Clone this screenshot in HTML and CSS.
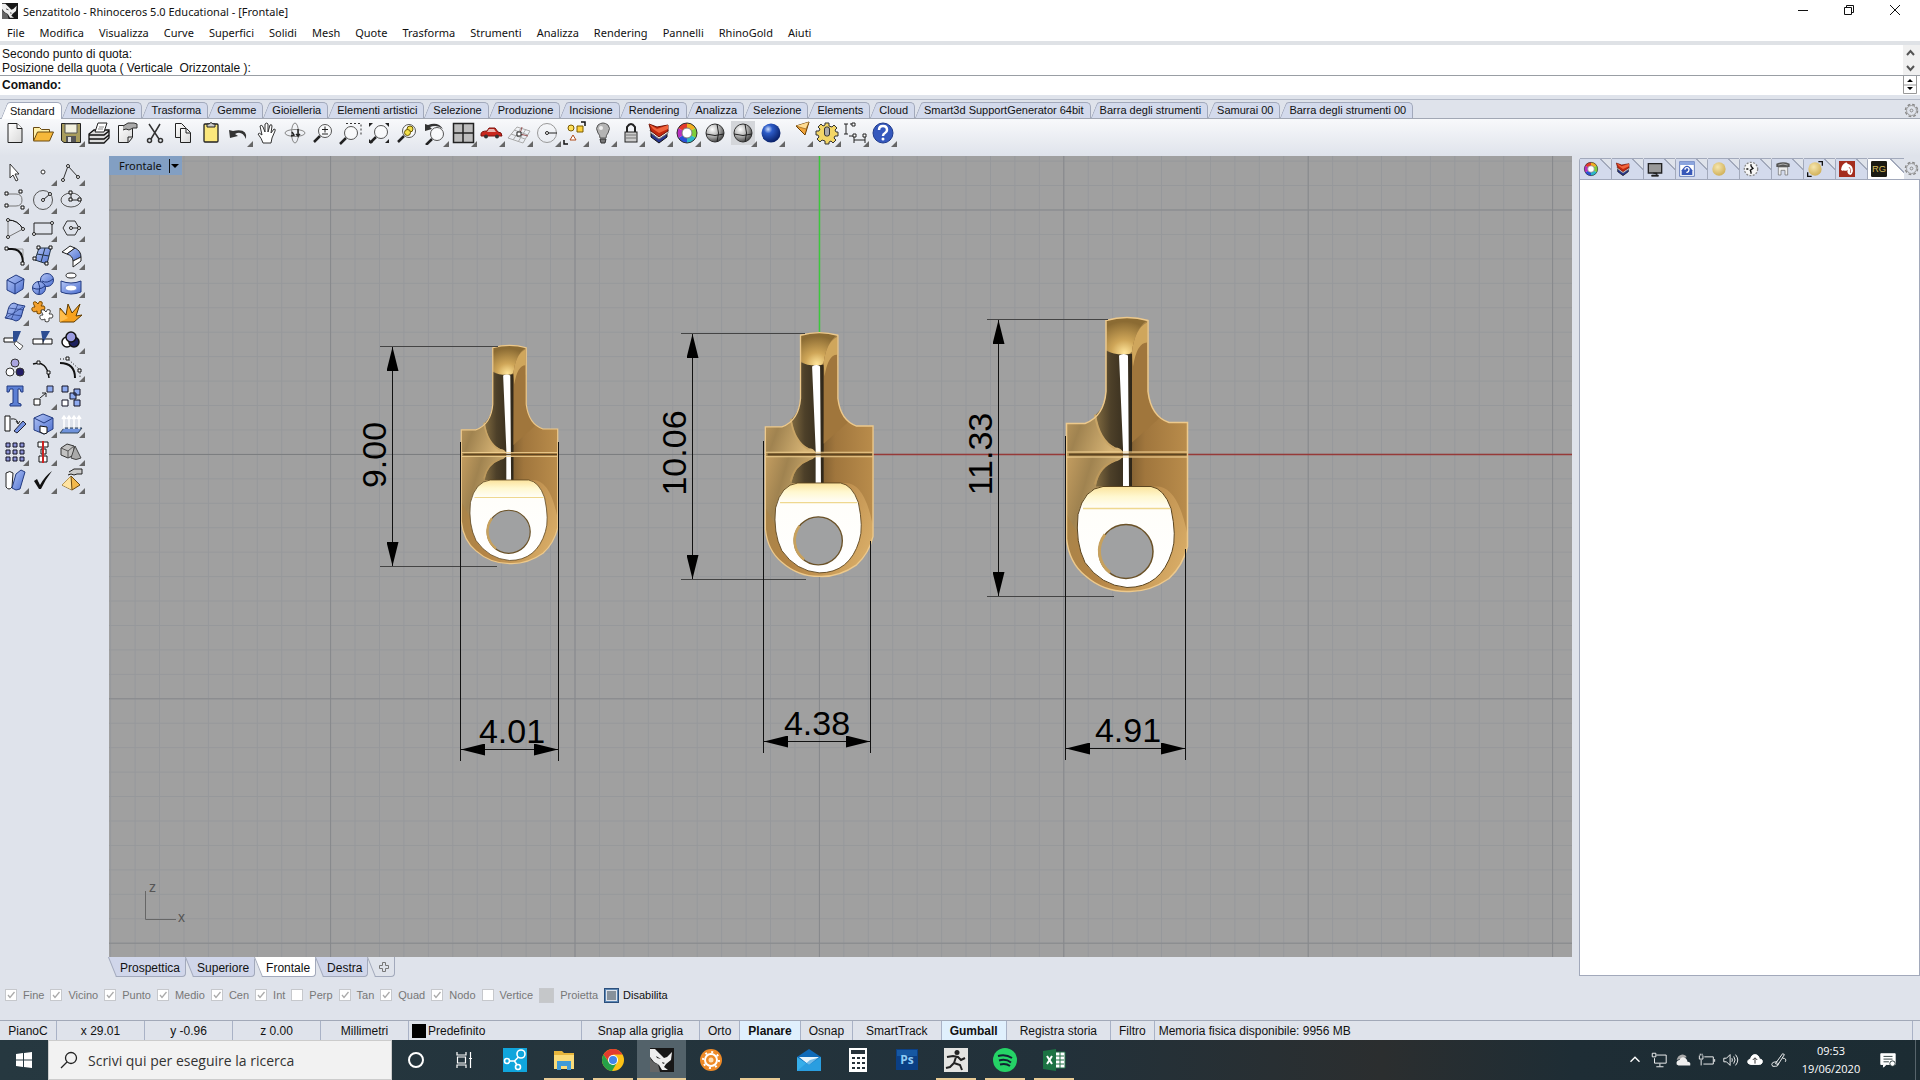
FILE: index.html
```html
<!DOCTYPE html>
<html lang="it">
<head>
  <meta charset="UTF-8" />
  <title>Senzatitolo - Rhinoceros 5.0 Educational - [Frontale]</title>
  <link rel="stylesheet" href="styles.css">
</head>
<body>
  <!-- shared gradients and shapes -->
  <svg class="defs" width="0" height="0">
    <defs>
      <linearGradient id="blue" x1="0" y1="0" x2="1" y2="1"><stop offset="0" stop-color="#b4c6f6"/><stop offset="1" stop-color="#4c6fd0"/></linearGradient>
      <linearGradient id="paper" x1="0" y1="0" x2="1" y2="1"><stop offset="0" stop-color="#fff"/><stop offset="1" stop-color="#d8d8d8"/></linearGradient>
      <radialGradient id="ballGrey" cx=".35" cy=".3" r=".75"><stop offset="0" stop-color="#fff"/><stop offset=".5" stop-color="#b5b5b5"/><stop offset="1" stop-color="#3c3c3c"/></radialGradient>
      <radialGradient id="ballBlue" cx=".35" cy=".3" r=".75"><stop offset="0" stop-color="#cfe0ff"/><stop offset=".3" stop-color="#2d5cc8"/><stop offset="1" stop-color="#061c62"/></radialGradient>
      <radialGradient id="ballGold" cx=".4" cy=".35" r=".7"><stop offset="0" stop-color="#f6e6ae"/><stop offset="1" stop-color="#cfae55"/></radialGradient>
      <linearGradient id="body" x1="0" y1="0" x2="1" y2="1"><stop offset="0" stop-color="#dcb573"/><stop offset=".3" stop-color="#a5844b"/><stop offset=".6" stop-color="#b48445"/><stop offset="1" stop-color="#e0b56e"/></linearGradient>
      <linearGradient id="right" x1="0" y1="0" x2="1" y2="0"><stop offset="0" stop-color="#7c5c30"/><stop offset=".3" stop-color="#a0763d"/><stop offset="1" stop-color="#b98c4b"/></linearGradient>
      <linearGradient id="left" x1="0" y1="0" x2="1" y2=".4"><stop offset="0" stop-color="#c39d60"/><stop offset=".4" stop-color="#a08350"/><stop offset="1" stop-color="#d6b374"/></linearGradient>
      <linearGradient id="dark" x1="0" y1="0" x2="1" y2="0"><stop offset="0" stop-color="#806a40"/><stop offset=".4" stop-color="#4d4029"/><stop offset="1" stop-color="#2e2619"/></linearGradient>
      <radialGradient id="shine" cx=".45" cy=".9" r=".8"><stop offset="0" stop-color="#ffe59a"/><stop offset=".4" stop-color="#cfa658"/><stop offset="1" stop-color="#8b6b33"/></radialGradient>
      <linearGradient id="cream" x1="0" y1="0" x2="0" y2="1"><stop offset="0" stop-color="#fbe39c"/><stop offset=".1" stop-color="#fff8d0"/><stop offset=".22" stop-color="#fffefa"/><stop offset="1" stop-color="#fff"/></linearGradient>
      <pattern id="minor" x="818.9" y="453.9" width="24.44" height="24.44" patternUnits="userSpaceOnUse"><path d="M.5 0V24.44M0 .5H24.44" stroke="#96989b" fill="none"/></pattern>
      <pattern id="major" x="818.9" y="453.9" width="244.4" height="244.4" patternUnits="userSpaceOnUse"><path d="M.5 0V244.4M0 .5H244.4" stroke="#86888b" fill="none"/></pattern>
      <symbol id="gear" viewBox="0 0 16 16"><circle cx="8" cy="8" r="6.500" fill="none" stroke="#888" stroke-width="1.500" stroke-dasharray="3 2.100"/><circle cx="8" cy="8" r="5.300" fill="none" stroke="#999"/><circle cx="8" cy="8" r="1.500" fill="none" stroke="#888"/></symbol>
      <symbol id="wheel" viewBox="0 0 24 24"><g fill="none" stroke-width="5"><path d="M12 4.500A7.500 7.500 0 0 1 18.500 8.200" stroke="#f0b022"/><path d="M18.500 8.200A7.500 7.500 0 0 1 18.500 15.800" stroke="#7ecf3a"/><path d="M18.500 15.800A7.500 7.500 0 0 1 12 19.500" stroke="#2cb8c8"/><path d="M12 19.500A7.500 7.500 0 0 1 5.500 15.800" stroke="#2a50d8"/><path d="M5.500 15.800A7.500 7.500 0 0 1 5.500 8.200" stroke="#b830c0"/><path d="M5.500 8.200A7.500 7.500 0 0 1 12 4.500" stroke="#e23a2c"/></g><circle cx="12" cy="12" r="10" fill="none" stroke="#333"/><circle cx="12" cy="12" r="5" fill="#fff" stroke="#777"/></symbol>
      <symbol id="layers" viewBox="0 0 24 24"><path d="M4 12l8 5 8-6v5l-8 6-8-6z" fill="#28368c" stroke="#111"/><path d="M3 9l9 5 9-5v3l-9 6-8-6z" fill="#fff" stroke="#777"/><path d="M2 3l8 3 11-2v6l-9 6-8-6z" fill="#c2280e" stroke="#6c1206"/><path d="M2 3l8 5 11-4v4l-9 4-6-4z" fill="#f0643c"/></symbol>
      <symbol id="rhino" viewBox="0 0 24 24"><path d="M0 0h24v24H0z" fill="#171717"/><path d="M0 1h5l5 5 4 4 3-1 5-5-1 8-5 4-2 3 4 3h-6l-3-5-5-3-4-5z" fill="#eee"/><path d="M0 9q2 6 8 7l2 8H0z" fill="#666"/><path d="M6 8l5 3-4-1zM12 14l3 1-2 1z" fill="#222"/></symbol>
      <symbol id="lens" viewBox="0 0 24 24"><circle cx="14" cy="10" r="6.500" fill="#fff" fill-opacity=".6" stroke="#555"/><path d="M9 15l-6 6" stroke="#222" stroke-width="2.500"/></symbol>
      <symbol id="pendant" viewBox="-62 -139 124 278" overflow="visible">
        <path d="M-21-134Q0-140 21-134V-63Q24-38 42-32H60.500V92Q56 111 42 124Q22 138 0 137Q-24 137-42 121Q-58 108-60.500 84V-31H-42Q-23-38-21-63Z" fill="url(#body)"/>
        <path d="M0-100H21V-63Q24-38 42-32H60V-2H0Z" fill="url(#right)"/>
        <path d="M0 2H60V78Q50 30 28 32H0Z" fill="url(#right)"/>
        <path d="M-60-31H-42Q-23-38-21-63L-4-2H-60Z" fill="url(#left)"/>
        <path d="M-60 2H-4V32H-24Q-44 34-50 78L-60 60Z" fill="url(#left)"/>
        <path d="M-21-134Q0-140 20-134Q8-126 5-103Q-6-92-20-105Z" fill="url(#shine)"/>
        <path d="M-21-104Q-10-98 6-101L5-2H-4Q-6-7-12-7Q-28-14-31-40Q-22-48-21-63Z" fill="url(#dark)"/>
        <path d="M5-103Q8-126 20-132V-63Q22-44 32-36L5-12Z" fill="#a0763c"/>
        <path d="M5-103Q8-126 20-132V-112Q10-112 6-88Z" fill="#cfa65c"/>
        <path d="M-31 32Q-28 12-12 7Q-7 6-5 3H5V32Z" fill="url(#dark)"/>
        <path d="M-32-40Q-28-14-12-6" fill="none" stroke="#c9a566" stroke-width="2"/>
        <path d="M-32 30Q-28 12-12 6" fill="none" stroke="#bd995c" stroke-width="2"/>
        <path d="M-8-99Q-3-102 1-99L2 34H-4L-4-6Z" fill="#fff"/>
        <path d="M-58 0H60" stroke="#5d4521" stroke-width="2"/>
        <path d="M-60-2.500H60M-60 2.500H60" stroke="#f5d596"/>
        <path d="M-21-134Q0-140 21-134V-63Q24-38 42-32H60.500V92Q56 111 42 124Q22 138 0 137Q-24 137-42 121Q-58 108-60.500 84V-31H-42Q-23-38-21-63Z" fill="none" stroke="#edc98c" stroke-width="1.500"/>
        <path d="M-24 32H24Q37 34 44 54Q50 82 45 97Q34 133 0 133Q-26 131-42 108Q-52 88-49 60Q-43 34-24 32Z" fill="url(#cream)" stroke="#5c451f"/>
        <path d="M-44 54H43" stroke="#efd88f" stroke-width="1.500"/>
        <circle cx="-1" cy="97" r="27" fill="#a0a1a2" stroke="#6b5228" stroke-width="1.500"/>
        <path d="M-22 80A27 27 0 0 0-17 118" fill="none" stroke="#c7a15e" stroke-width="3"/>
      </symbol>
      <marker id="arrow" viewBox="0 0 24 12" refX="24" refY="6" markerWidth="24" markerHeight="12" markerUnits="userSpaceOnUse" orient="auto-start-reverse"><path d="M0 0L24 6L0 12z"/></marker>
    </defs>
  </svg>

  <header class="titlebar">
    <svg class="app-icon" viewBox="0 0 24 24"><use href="#rhino"/></svg>
    <span>Senzatitolo - Rhinoceros 5.0 Educational - [Frontale]</span>
    <div class="window-buttons">
      <button aria-label="Riduci"><svg viewBox="0 0 12 12"><path d="M1 6.500h10"/></svg></button>
      <button aria-label="Ripristina"><svg viewBox="0 0 12 12"><path d="M1.500 3.500h7v7h-7zM3.500 3.500v-2h7v7h-2"/></svg></button>
      <button aria-label="Chiudi"><svg viewBox="0 0 12 12"><path d="M1 1l10 10M11 1L1 11"/></svg></button>
    </div>
  </header>
  <nav class="menu">
    <button>File</button><button>Modifica</button><button>Visualizza</button><button>Curve</button><button>Superfici</button><button>Solidi</button><button>Mesh</button><button>Quote</button><button>Trasforma</button><button>Strumenti</button><button>Analizza</button><button>Rendering</button><button>Pannelli</button><button>RhinoGold</button><button>Aiuti</button>
  </nav>

  <section class="command">
    <div class="history">
      <div>Secondo punto di quota:<br>Posizione della quota ( Verticale&nbsp; Orizzontale ):</div>
      <div class="scroll"><svg viewBox="0 0 15 30"><path d="M4 10l3.500-4L11 10M4 21l3.500 4L11 21" fill="none" stroke="#555" stroke-width="2"/></svg></div>
    </div>
    <div class="prompt">
      <label for="cmd">Comando:</label>
      <input id="cmd" type="text">
      <div class="spin"><svg viewBox="0 0 15 18"><path d="M.5 0v17.500h13V0M.5 9h13" fill="none" stroke="#999"/><path d="M4 6l3-3 3 3zM4 11l3 3 3-3z"/></svg></div>
    </div>
  </section>

  <nav class="tool-tabs">
    <button class="tab active">Standard</button><button class="tab">Modellazione</button><button class="tab">Trasforma</button><button class="tab">Gemme</button><button class="tab">Gioielleria</button><button class="tab">Elementi artistici</button><button class="tab">Selezione</button><button class="tab">Produzione</button><button class="tab">Incisione</button><button class="tab">Rendering</button><button class="tab">Analizza</button><button class="tab">Selezione</button><button class="tab">Elements</button><button class="tab">Cloud</button><button class="tab">Smart3d SupportGenerator 64bit</button><button class="tab">Barra degli strumenti</button><button class="tab">Samurai 00</button><button class="tab">Barra degli strumenti 00</button>
    <svg class="gear"><use href="#gear"/></svg>
  </nav>

  <div class="toolbar">
    <button><svg viewBox="0 0 24 24"><path d="M5 2.500h9l5 5v14H5z" fill="url(#paper)" stroke="#222"/><path d="M14 2.500v5h5" fill="#fff" stroke="#222"/></svg></button>
    <button><svg viewBox="0 0 24 24"><path d="M2.500 19V6.500h6l2 2h8V11" fill="#fff0a8" stroke="#6a4a12"/><path d="M2.500 20l4-9h16l-4 9z" fill="#f6b83a" stroke="#6a4a12"/></svg></button>
    <button class="fly"><svg viewBox="0 0 24 24"><path d="M2.500 2.500h19v19H5l-2.500-2z" fill="#a89c5c" stroke="#222"/><path d="M6 3h12v9H6z" fill="#f2f0de" stroke="#555"/><path d="M7 15h10v6H7z" fill="#555"/><path d="M9 16h3v5H9z" fill="#ddd"/></svg></button>
    <button><svg viewBox="0 0 24 24"><path d="M2 13l5-4h15v8l-5 5H2z" fill="#ddd" stroke="#111" stroke-width="1.300"/><path d="M8 11l3-9h9l-3 9z" fill="#fff" stroke="#222"/><path d="M12 6h5M11 8h5" stroke="#888"/><path d="M2 14h15l5-4M2 18h15l5-4" fill="none" stroke="#111" stroke-width="1.500"/></svg></button>
    <button><svg viewBox="0 0 24 24"><path d="M3.500 4.500h14v12l-4 5h-10z" fill="url(#paper)" stroke="#222"/><path d="M13 21v-5h4" fill="none" stroke="#222"/><path d="M8 5l5-3h6l3 1v4h-4l-4 2-3-1-3 1" fill="#aaa" stroke="#333"/></svg></button>
    <button><svg viewBox="0 0 24 24"><g fill="none" stroke="#333" stroke-width="1.500"><path d="M6 3l10 15M17 3L8 18"/><circle cx="6.500" cy="19.500" r="2"/><circle cx="17.500" cy="19.500" r="2"/></g></svg></button>
    <button><svg viewBox="0 0 24 24"><g fill="url(#paper)" stroke="#222"><path d="M4.500 2.500h6l4 4v10h-10z"/><path d="M9.500 7.500h6l4 4v10h-10z"/><path d="M15 8v4h4" fill="none"/></g></svg></button>
    <button><svg viewBox="0 0 24 24"><rect x="5" y="3" width="14" height="18" rx="1" fill="#fbe77c" stroke="#222" stroke-width="1.300"/><path d="M8 6V3h2q2-3 4 0h2v3z" fill="#ccc" stroke="#222"/></svg></button>
    <button class="fly"><svg viewBox="0 0 24 24"><path d="M2 9l1 8 8-2-3-2q7-4 11 5 2-11-13-8z" fill="#333"/></svg></button>
    <button><svg viewBox="0 0 24 24"><path d="M8 22q-1-4-5-9 1-2 4 1L5 5q2-2 3 1l2 5V3q2-2 3 0v8l2-7q2-1 2 1l-1 7 3-4q2 0 1 2l-3 7-1 5z" fill="#fff" stroke="#333"/></svg></button>
    <button><svg viewBox="0 0 24 24"><ellipse cx="12" cy="12" rx="10" ry="3.500" fill="none" stroke="#888"/><ellipse cx="12" cy="12" rx="3.500" ry="10" fill="none" stroke="#888"/><path d="M15 8v7l-2-2M8 15l3-1-2-3M15 15l2-2" stroke="#222" fill="none" stroke-width="1.500"/></svg></button>
    <button><svg viewBox="0 0 24 24"><use href="#lens"/><path d="M11 8.500h6M14 5.500v6M11 13h6" stroke="#222"/></svg></button>
    <button><svg viewBox="0 0 24 24"><path d="M7 2.500h15v13" fill="none" stroke="#333" stroke-dasharray="2 2"/><use href="#lens" x="-2" y="2"/></svg></button>
    <button><svg viewBox="0 0 24 24"><use href="#lens" y="1"/><path d="M2 6V2h4zM18 2h4v4zM22 18v4h-4zM2 18v4h4z" fill="#222"/></svg></button>
    <button><svg viewBox="0 0 24 24"><use href="#lens"/><circle cx="15" cy="8" r="3" fill="#f3e04a" stroke="#665500"/><circle cx="12.500" cy="11.500" r="3" fill="#f3e04a" stroke="#665500"/></svg></button>
    <button class="fly"><svg viewBox="0 0 24 24"><use href="#lens" y="3"/><path d="M2 3v7l7-2-2-2q7-3 13 2-5-8-15-4z" fill="#333"/></svg></button>
    <button class="fly"><svg viewBox="0 0 24 24"><path d="M2.500 2.500h20v19h-20zM12 2v20M2 12h21" fill="#bdbdbd" stroke="#222" stroke-width="1.500"/></svg></button>
    <button class="fly"><svg viewBox="0 0 24 24"><path d="M2 13q0-3 6-3l2-3h6l3 4q4 0 4 4H2z" fill="#c9271e" stroke="#7c120c"/><path d="M10 8h5l2 3H8z" fill="#e9b5b0"/><circle cx="7" cy="15.500" r="2" fill="#333"/><circle cx="18" cy="15.500" r="2" fill="#333"/></svg></button>
    <button class="fly"><svg viewBox="0 0 24 24"><path d="M1 17l9-11 13 4-7 12zM4 13l14 5M7 9l14 5M6 19l8-12M11 21l8-13" fill="none" stroke="#aaa"/><path d="M13 13l2-7M13 13l8 2" fill="none" stroke="#955"/><path d="M10 11h4v4h-4z" fill="#fff" stroke="#222"/></svg></button>
    <button class="fly"><svg viewBox="0 0 24 24"><circle cx="12" cy="12" r="9.500" fill="none" stroke="#999"/><circle cx="12" cy="12" r="1.500" fill="#fff" stroke="#222"/><path d="M13 12h9" stroke="#222"/></svg></button>
    <button class="fly"><svg viewBox="0 0 24 24"><path d="M18 1h4v4M1 19v4h4" fill="none" stroke="#111" stroke-width="1.500"/><circle cx="8" cy="7" r="3" fill="#ffe05a" stroke="#7a5a00"/><path d="M14 5h6v6h-6z" fill="#ffd23a" stroke="#7a5a00"/><path d="M10 14l3 5H7z" fill="#fff" stroke="#b04a1a"/></svg></button>
    <button class="fly"><svg viewBox="0 0 24 24"><path d="M9 17q0-3-2-5-3-5 0-8 5-4 10 0 3 3 0 8-2 2-2 5z" fill="#b4b4b4" stroke="#555"/><circle cx="10" cy="7" r="2" fill="#eee"/><path d="M9 18h6l-1 4h-4z" fill="#777" stroke="#333"/></svg></button>
    <button class="fly"><svg viewBox="0 0 24 24"><path d="M8 11V6q4-6 8 0v5" fill="none" stroke="#222" stroke-width="2"/><rect x="6" y="11" width="12" height="10" fill="#ccc" stroke="#222"/><path d="M7 14h10M7 17h10" stroke="#777"/></svg></button>
    <button class="fly"><svg><use href="#layers"/></svg></button>
    <button class="fly"><svg><use href="#wheel"/></svg></button>
    <button><svg viewBox="0 0 24 24"><circle cx="12" cy="12" r="9" fill="url(#ballGrey)" stroke="#333"/><path d="M14 3q3 9 0 18M3 13q9 3 18 0" fill="none" stroke="#222"/></svg></button>
    <button class="fly"><svg viewBox="0 0 24 24"><path d="M0 0h24v24H0z" fill="#d4d6da"/><circle cx="12" cy="12" r="9" fill="url(#ballGrey)" stroke="#333"/><path d="M14 3q3 9 0 18M3 13q9 3 18 0" fill="none" stroke="#222"/></svg></button>
    <button class="fly"><svg viewBox="0 0 24 24"><circle cx="12" cy="12" r="9.500" fill="url(#ballBlue)"/></svg></button>
    <button class="fly"><svg viewBox="0 0 24 24"><path d="M9 5l13-4-4 13z" fill="#f2a53a" stroke="#6a3d00"/><path d="M9 5l10 3 3-7" fill="#ffdc92" stroke="#6a3d00" stroke-width=".5"/></svg></button>
    <button class="fly"><svg viewBox="0 0 24 24"><path d="M10 2h4v3l3 1 2-2 3 3-2 2 1 2h2v4h-3l-1 2 2 2-3 3-2-2-2 1v2h-4v-3l-3-1-2 2-3-3 2-2-1-2H1v-4h3l1-2-2-2 3-3 2 2 2-1z" fill="#f3d666" stroke="#333"/><rect x="9.500" y="6" width="5" height="9" rx="2" fill="#aaa" stroke="#333"/></svg></button>
    <button class="fly"><svg viewBox="0 0 24 24"><path d="M3 3v10M1 3h4M1 13h4M7 3h5M11 15v7M22 14v8M11 19h11M11 15H6" fill="none" stroke="#222"/><path d="M9 2h3v3H9zM10 13h3v3h-3zM20 13h3v3h-3z" fill="#fff" stroke="#222"/></svg></button>
    <button class="fly"><svg viewBox="0 0 24 24"><circle cx="12" cy="12" r="10" fill="#3558bd" stroke="#1f3a8c"/><path d="M8 9q0-4 4-4t4 4q0 2-2 3t-2 3" fill="none" stroke="#fff" stroke-width="2.500"/><circle cx="12" cy="18" r="1.500" fill="#fff"/></svg></button>
  </div>

  <main class="workspace">
    <aside class="palette">
      <button><svg viewBox="0 0 24 24"><path d="M7 4v14l3-3 3 6 2-1-3-6h4z" fill="#fff" stroke="#333"/></svg></button>
      <button class="fly"><svg viewBox="0 0 24 24"><circle cx="12" cy="12" r="2" fill="#fff" stroke="#333"/></svg></button>
      <button class="fly"><svg viewBox="0 0 24 24"><path d="M4 20L9 6l10 11" fill="none" stroke="#333"/><g fill="#fff" stroke="#222"><circle cx="4" cy="20" r="1.500"/><circle cx="9" cy="6" r="1.500"/><circle cx="19" cy="17" r="1.500"/></g></svg></button>
      <button class="fly"><svg viewBox="0 0 24 24"><path d="M4 6h9q6 0 6 6t-6 6H4" fill="none" stroke="#777"/><path d="M2 4h3v3H2zM2 16h3v3H2zM16 2h3v3h-3zM18 18h3v3h-3z" fill="#fff" stroke="#111"/></svg></button>
      <button class="fly"><svg viewBox="0 0 24 24"><circle cx="12" cy="12" r="9.500" fill="none" stroke="#555"/><path d="M12 12l7-6" stroke="#222"/><circle cx="12" cy="12" r="1.500" fill="#fff" stroke="#222"/><circle cx="19" cy="6" r="1.500" fill="#fff" stroke="#222"/></svg></button>
      <button class="fly"><svg viewBox="0 0 24 24"><ellipse cx="12" cy="12" rx="10" ry="7" fill="none" stroke="#555"/><path d="M12 5v7h9" fill="none" stroke="#222"/><path d="M10 3h3v3h-3zM10 10h3v3h-3zM19 10h3v3h-3z" fill="#fff" stroke="#111"/></svg></button>
      <button class="fly"><svg viewBox="0 0 24 24"><path d="M5 21V4q10 0 15 9z" fill="none" stroke="#777"/><path d="M5 4q10 0 15 9" fill="none" stroke="#111"/><g fill="#fff" stroke="#222"><circle cx="5" cy="4" r="1.500"/><circle cx="5" cy="21" r="1.500"/><circle cx="20" cy="13" r="1.500"/></g></svg></button>
      <button class="fly"><svg viewBox="0 0 24 24"><path d="M3 7h18v11H3z" fill="none" stroke="#222"/><circle cx="3" cy="18" r="1.500" fill="#fff" stroke="#222"/><circle cx="21" cy="7" r="1.500" fill="#fff" stroke="#222"/></svg></button>
      <button class="fly"><svg viewBox="0 0 24 24"><path d="M8 5h8l4 7-4 7H8l-4-7zM12 12h8" fill="none" stroke="#333"/><circle cx="12" cy="12" r="1.500" fill="#fff" stroke="#222"/><circle cx="20" cy="12" r="1.500" fill="#fff" stroke="#222"/></svg></button>
      <button class="fly"><svg viewBox="0 0 24 24"><path d="M4 5h16v16" fill="none" stroke="#999"/><path d="M4 5h5q11 0 11 15" fill="none" stroke="#111" stroke-width="2"/><path d="M2 3h3v3H2zM18 18h3v3h-3z" fill="#fff" stroke="#111"/></svg></button>
      <button class="fly"><svg viewBox="0 0 24 24"><path d="M8 4h12l-4 16-12-4z" fill="url(#blue)" stroke="#234"/><path d="M14 4l-4 14M6 10l12 2" stroke="#234"/><path d="M6 2h3v3H6zM18 2h3v3h-3zM14 18h3v3h-3zM2 13h3v3H2z" fill="#fff" stroke="#111"/></svg></button>
      <button class="fly"><svg viewBox="0 0 24 24"><path d="M3 8l8-6 5 2-8 6z" fill="#fff" stroke="#222"/><path d="M8 10l8-6q6 3 6 9l-8 4q0-5-6-7z" fill="url(#blue)" stroke="#222"/><path d="M14 17l8-4v4l-8 6z" fill="#fff" stroke="#222"/></svg></button>
      <button class="fly"><svg viewBox="0 0 24 24"><path d="M4 8l9-5 8 4-1 10-8 5-8-4z" fill="url(#blue)" stroke="#223a80"/><path d="M4 8l8 4 9-5M12 12v10" fill="none" stroke="#223a80"/></svg></button>
      <button class="fly"><svg viewBox="0 0 24 24"><g fill="url(#blue)" stroke="#223a80"><circle cx="16" cy="8" r="6.500"/><circle cx="8" cy="16" r="6.500"/><path d="M2 16q6 3 12-2M7 9q3 6 1 13M11 9q5 3 11-2" fill="none"/></g></svg></button>
      <button class="fly"><svg viewBox="0 0 24 24"><ellipse cx="12" cy="3.500" rx="5" ry="2.500" fill="#fff" stroke="#222"/><path d="M2 9q10 4 20 0v11q-10 4-20 0z" fill="url(#blue)" stroke="#223a80"/><ellipse cx="12" cy="16" rx="6" ry="3" fill="#fff" stroke="#7791dd"/></svg></button>
      <button class="fly"><svg viewBox="0 0 24 24"><path d="M2 18q2-2 3-8t6-7q3 2 11 3-2 2-3 8t-6 7q-3-2-11-3z" fill="url(#blue)" stroke="#223a80"/><path d="M4 13q6 2 15 3M6 8q7 1 15 2M8 20l7-16M3 18l17-11" fill="none" stroke="#223a80" stroke-width=".7"/></svg></button>
      <button><svg viewBox="0 0 24 24"><path d="M3 5q-2-4 2-3l2 2q1-4 4-2 1 2-1 4 4-1 4 2t-4 2q1 4-2 4t-2-3q-4 2-5-1t3-3z" fill="#f3a12e" stroke="#7a4a00"/><path d="M11 13q-2-4 2-3l2 2q1-4 4-2 1 2-1 4 4-1 4 2t-4 2q1 4-2 4t-2-3q-4 2-5-1t3-3z" fill="#fff" stroke="#444"/></svg></button>
      <button><svg viewBox="0 0 24 24"><path d="M1 22V8l6 7 2-11 4 9 8-9-4 12 6-1-8 7z" fill="#f7a21e" stroke="#5e3b00"/><path d="M1 22V10l8 8z" fill="#ffbe4d"/></svg></button>
      <button><svg viewBox="0 0 24 24"><path d="M1 10h11v4H1z" fill="#fff" stroke="#111"/><path d="M10 3h8l-5 12-3-2z" fill="#2d4d92"/><path d="M13 13l7 5-3 4-6-6z" fill="#fff" stroke="#555"/></svg></button>
      <button><svg viewBox="0 0 24 24"><path d="M2 11h19v5H2z" fill="#fff" stroke="#111"/><path d="M10 3h9l-7 12z" fill="#2d4d92"/><path d="M12 11v5" stroke="#111"/></svg></button>
      <button class="fly"><svg viewBox="0 0 24 24"><g stroke="#111" stroke-width="1.500"><circle cx="8" cy="14" r="5" fill="#fff"/><circle cx="15" cy="14" r="5" fill="#1c205e"/><circle cx="12" cy="9" r="5" fill="#9a9be0"/></g></svg></button>
      <button><svg viewBox="0 0 24 24"><g stroke="#333"><circle cx="12" cy="7" r="4" fill="#a9a4e0"/><circle cx="7" cy="16" r="4" fill="#fff"/><circle cx="17" cy="16" r="4" fill="#231d66"/></g></svg></button>
      <button><svg viewBox="0 0 24 24"><path d="M2 8q14-4 16 14" fill="none" stroke="#111" stroke-width="1.500"/><path d="M6 5h3v3H6zM16 15h3v3h-3z" fill="#fff" stroke="#111"/></svg></button>
      <button class="fly"><svg viewBox="0 0 24 24"><path d="M1 7q15 0 15 15" fill="none" stroke="#111" stroke-width="2"/><path d="M1 3h8l12 11v8" fill="none" stroke="#111" stroke-dasharray="1 2"/><path d="M7 1h3v3H7zM19 13h3v3h-3z" fill="#fff" stroke="#111"/></svg></button>
      <button><svg viewBox="0 0 24 24"><path d="M4 2h16v6h-2l-1-3h-2v14l3 1v2H7v-2l3-1V5H7L6 8H4z" fill="#5b7fd4" stroke="#223a80"/></svg></button>
      <button class="fly"><svg viewBox="0 0 24 24"><path d="M3 15h6v6H3z" fill="#fff" stroke="#111"/><path d="M16 2h6v6h-6z" fill="#8fabf0" stroke="#223"/><path d="M9 14l6-5M15 9h-4M15 9v4" fill="none" stroke="#222"/></svg></button>
      <button><svg viewBox="0 0 24 24"><g fill="#8fabf0" stroke="#112"><path d="M3 2h6v6H3zM15 5h6v6h-6zM11 9h6v6h-6zM15 16h6v6h-6z"/><path d="M3 16h6v6H3z" fill="#fff"/></g></svg></button>
      <button><svg viewBox="0 0 24 24"><path d="M2 4h5v15H2z" fill="#fff" stroke="#111"/><path d="M11 19L20 9l3 3-9 9z" fill="#7593e2" stroke="#223"/><path d="M8 7q6-1 7 4M13 9l2 3 2-3" fill="none" stroke="#222"/></svg></button>
      <button class="fly"><svg viewBox="0 0 24 24"><path d="M3 6l9-4 10 4v11l-9 5-10-4z" fill="url(#blue)" stroke="#223a80"/><path d="M3 6l10 5 9-5" fill="none" stroke="#223a80"/><path d="M9 14l7 1v6l-3 1-4-2z" fill="#fff" stroke="#111"/></svg></button>
      <button class="fly"><svg viewBox="0 0 24 24"><path d="M1 21l4-5h18l-4 5z" fill="#6f93dc" stroke="#345"/><path d="M5 17V5M10 17V4M15 17V4M20 17V5M3 7l2-3 2 3M8 7l2-3 2 3M13 7l2-3 2 3M18 7l2-3 2 3" fill="none" stroke="#fff" stroke-width="1.500"/></svg></button>
      <button class="fly"><svg viewBox="0 0 24 24"><path d="M3 3h4v4H3zM10 3h4v4h-4zM17 3h4v4h-4zM3 10h4v4H3zM10 10h4v4h-4zM17 10h4v4h-4zM3 17h4v4H3zM10 17h4v4h-4zM17 17h4v4h-4z" fill="#8e94d8" stroke="#112"/></svg></button>
      <button class="fly"><svg viewBox="0 0 24 24"><path d="M7 2h10v5H7zM10 9h5v5h-5zM8 16h8v6H8z" fill="#fff" stroke="#111"/><path d="M12 1v22" stroke="#c22" stroke-width="2"/></svg></button>
      <button class="fly"><svg viewBox="0 0 24 24"><path d="M2 8l6-4 7 2v9l-6 3-7-3z" fill="#c2c2c2" stroke="#333"/><path d="M2 8l7 3 6-5M9 11v7" fill="none" stroke="#555"/><path d="M16 6l6 12q-5 3-10 0z" fill="#aaa" stroke="#444"/></svg></button>
      <button class="fly"><svg viewBox="0 0 24 24"><path d="M3 5q4-3 7 0l-1 14q-3 4-6 0z" fill="#fff" stroke="#222"/><path d="M13 6l5-4 4 2-5 17-4 1-4-2z" fill="url(#blue)" stroke="#223a80"/></svg></button>
      <button class="fly"><svg viewBox="0 0 24 24"><path d="M3 13l3-2 3 6Q14 8 21 3q-7 9-11 18H8z" fill="#111"/></svg></button>
      <button class="fly"><svg viewBox="0 0 24 24"><path d="M3 17l9-9 9 9-8 5z" fill="#f3b94c" stroke="#6a4a12"/><path d="M12 8l-9 9 10 5z" fill="#ffe3a0"/><path d="M12 8l1 14" stroke="#6a4a12"/><path d="M10 4l5-3h8v5h-5l-3 1-3-1-3 1" fill="#ccc" stroke="#222"/></svg></button>
    </aside>

    <div class="view-column">
      <div class="viewport">
        <svg class="scene" viewBox="109 156 1463 801" preserveAspectRatio="xMinYMin slice">
          <rect x="109" y="156" width="1463" height="801" fill="#a0a0a0"/>
          <rect x="109" y="156" width="1463" height="801" fill="url(#minor)"/>
          <rect x="109" y="156" width="1463" height="801" fill="url(#major)"/>
          <path d="M819.500 156V454" stroke="#3cc83c" stroke-width="1.500"/>
          <path d="M819 454.500H1572" stroke="#963a38" stroke-width="1.500"/>
          <path d="M109 454.500H819" stroke="#7c7e80"/>

          <use href="#pendant" x="460.100" y="343.700" width="98.800" height="221.600"/>
          <use href="#pendant" x="764" y="330.800" width="110.400" height="247.400"/>
          <use href="#pendant" x="1065" y="315.500" width="124" height="278"/>

          <!-- dimension lines -->
          <g class="dim-lines thin">
            <path d="M380 346.500H498M380 566.500H497M681 333.500H805M681 579.500H806M987 319.500H1108M987 596.500H1114"/>
          </g>
          <g class="dim-lines">
            <path d="M460.500 442V761M558.500 442V761M763.500 441V753M870.500 541V753M1065.500 436V760M1185.500 549V760"/>
          </g>
          <g class="dim-lines arrows">
            <path d="M392.500 347V566"/><path d="M461 749.500H558"/>
            <path d="M692.500 334V579"/><path d="M764 741.500H870"/>
            <path d="M998.500 320V596"/><path d="M1066 748.500H1185"/>
          </g>
          <g class="dim-text">
            <text transform="translate(386 455) rotate(-90)">9.00</text>
            <text x="512" y="743">4.01</text>
            <text transform="translate(686 453) rotate(-90)">10.06</text>
            <text x="817" y="735">4.38</text>
            <text transform="translate(992 454) rotate(-90)">11.33</text>
            <text x="1128" y="742">4.91</text>
          </g>
          <path d="M145.500 891V919.500H176" fill="none" stroke="#666"/>
          <g class="axis-text"><text x="149" y="892">z</text><text x="178" y="922">x</text></g>
        </svg>
        <button class="view-name"><span>Frontale</span><svg viewBox="0 0 12 14"><path d="M1.500 0v14" stroke="#111"/><path d="M3 5h8l-4 4z"/></svg></button>
      </div>
      <nav class="view-tabs">
        <button>Prospettica</button><button>Superiore</button><button class="active">Frontale</button><button>Destra</button><button class="add" aria-label="Nuova vista"><svg viewBox="0 0 10 10"><path d="M3.500.5h3v3h3v3h-3v3h-3v-3h-3v-3h3z" fill="none" stroke="#777"/></svg></button>
      </nav>
    </div>

    <aside class="panel">
      <nav class="panel-tabs">
        <button><svg><use href="#wheel"/></svg></button>
        <button><svg><use href="#layers"/></svg></button>
        <button><svg viewBox="0 0 24 24"><path d="M2 4h20v14H2z" fill="#999" stroke="#222" stroke-width="2"/><path d="M9 18h6v3H7v2h10v-2h-2" fill="#222" stroke="#222"/></svg></button>
        <button><svg viewBox="0 0 24 24"><path d="M1 1h22v22H1z" fill="#fff" stroke="#2c4b9f"/><path d="M1 1h22v5H1z" fill="#8ba4de"/><path d="M4 21v-7q8-14 16 0v7z" fill="#3757b8"/><path d="M9 13q0-3 3-3t3 3-3 4v1" fill="none" stroke="#fff" stroke-width="2"/></svg></button>
        <button><svg viewBox="0 0 24 24"><circle cx="12" cy="12" r="10" fill="url(#ballGold)"/></svg></button>
        <button><svg viewBox="0 0 24 24"><circle cx="12" cy="12" r="10" fill="#f6f6f6" stroke="#888" stroke-width="2" stroke-dasharray="3 2"/><path d="M12 5v3M12 16v3M5 12h3M12 8l3 3-4 3 1 3" fill="none" stroke="#111" stroke-width="2"/></svg></button>
        <button><svg viewBox="0 0 24 24"><path d="M2 4q10-4 20 0v5H2z" fill="#555"/><path d="M5 6q7-3 14 0" fill="none" stroke="#ddd"/><path d="M5 9h14v12h-4v-7H9v7H5z" fill="#eee" stroke="#666"/></svg></button>
        <button><svg viewBox="0 0 24 24"><circle cx="12" cy="12" r="10" fill="url(#ballGold)"/><path d="M17 1h6v6M1 17v6h6" fill="none" stroke="#111" stroke-width="2"/></svg></button>
        <button><svg viewBox="0 0 24 24"><path d="M0 0h24v24H0z" fill="#a42c1e"/><path d="M3 13Q4 5 11 2l2 2q8 2 8 11-1 5-4 6-6-2-4-8-3 3-6 1-1 2-4-1z" fill="#fff"/><path d="M15 9q4 3 2 9" fill="none" stroke="#a42c1e"/></svg></button>
        <button class="active"><svg class="rg" viewBox="0 0 24 24"><rect width="24" height="24" rx="2" fill="#1b1a12"/><text x="12" y="17">RG</text></svg></button>
        <svg class="gear"><use href="#gear"/></svg>
      </nav>
      <div class="panel-body"></div>
    </aside>
  </main>

  <form class="osnap">
    <label><input type="checkbox" checked disabled>Fine</label>
    <label><input type="checkbox" checked disabled>Vicino</label>
    <label><input type="checkbox" checked disabled>Punto</label>
    <label><input type="checkbox" checked disabled>Medio</label>
    <label><input type="checkbox" checked disabled>Cen</label>
    <label><input type="checkbox" checked disabled>Int</label>
    <label><input type="checkbox" disabled>Perp</label>
    <label><input type="checkbox" checked disabled>Tan</label>
    <label><input type="checkbox" checked disabled>Quad</label>
    <label><input type="checkbox" checked disabled>Nodo</label>
    <label><input type="checkbox" disabled>Vertice</label>
    <label><input class="box grey" type="checkbox" disabled>Proietta</label>
    <label class="on"><input class="box" type="checkbox" checked>Disabilita</label>
  </form>

  <footer class="status">
    <span class="w-plane">PianoC</span>
    <span class="w-coord">x 29.01</span>
    <span class="w-coord">y -0.96</span>
    <span class="w-coord">z 0.00</span>
    <span class="w-coord">Millimetri</span>
    <span class="w-layer"><i></i>Predefinito</span>
    <button class="w-grid">Snap alla griglia</button>
    <button>Orto</button>
    <button class="on">Planare</button>
    <button>Osnap</button>
    <button class="wide">SmartTrack</button>
    <button class="on">Gumball</button>
    <button class="wide">Registra storia</button>
    <button>Filtro</button>
    <span class="memory">Memoria fisica disponibile: 9956 MB</span>
  </footer>

  <footer class="taskbar">
    <button class="start" aria-label="Start"><svg viewBox="0 0 16 16"><path d="M0 2l7-1v6.500H0zM8 1l8-1v7.500H8zM0 8.500h7V15l-7-1zM8 8.500h8V16l-8-1z" fill="#fff"/></svg></button>
    <div class="search"><svg viewBox="0 0 18 18"><circle cx="11" cy="7" r="5.500" fill="none" stroke="#222" stroke-width="1.300"/><path d="M7 11l-6 6" stroke="#222" stroke-width="1.300"/></svg><input type="text" placeholder="Scrivi qui per eseguire la ricerca" aria-label="Scrivi qui per eseguire la ricerca"></div>
    <button><svg viewBox="0 0 24 24"><circle cx="12" cy="12" r="7" fill="none" stroke="#fff" stroke-width="2"/></svg></button>
    <button class="task-view"><svg viewBox="0 0 24 24"><path d="M4 4v3h9V4M4 20v-3h9v3M4.500 9h8v6h-8zM17.500 4v16M16 10.500h3" fill="none" stroke="#fff" stroke-width="1.200"/></svg></button>
    <button class="app"><svg viewBox="0 0 24 24"><path d="M0 0h24v24H0z" fill="#10a5dc"/><g fill="none" stroke="#fff" stroke-width="1.600"><circle cx="4" cy="13" r="2.500"/><circle cx="18" cy="6" r="4"/><circle cx="15" cy="19" r="2.500"/><path d="M6.500 13h5l4-4M11.500 13l2.500 4"/></g></svg></button>
    <button class="app open"><svg viewBox="0 0 24 24"><path d="M2 3h8l2 2h10v16H2z" fill="#e7b63c"/><path d="M2 7h20v14H2z" fill="#fbdc79"/><path d="M5 13h14v9h-4v-4H9v4H5z" fill="#3f9bd8"/></svg></button>
    <button class="app open"><svg viewBox="0 0 24 24"><circle cx="12" cy="12" r="11" fill="#fbc116"/><path d="M2.500 6.500A11 11 0 0 1 21.500 6.500H12L8 14z" fill="#e33b2e"/><path d="M2.500 6.500A11 11 0 0 0 11 23l5-8.500H8z" fill="#26a148"/><circle cx="12" cy="12" r="5" fill="#fff"/><circle cx="12" cy="12" r="4" fill="#4285e8"/></svg></button>
    <button class="app open active"><svg><use href="#rhino"/></svg></button>
    <button class="app"><svg viewBox="0 0 24 24"><circle cx="12" cy="12" r="11" fill="#ee8a28"/><circle cx="12" cy="12" r="6" fill="none" stroke="#fff" stroke-width="2"/><circle cx="12" cy="12" r="8" fill="none" stroke="#fff" stroke-width="2" stroke-dasharray="2 4.280"/><circle cx="12" cy="12" r="2.500" fill="#ffe0b5"/></svg></button>
    <button class="app open"></button>
    <button class="app"><svg viewBox="0 0 24 24"><path d="M0 9l12-8 12 8v14H0z" fill="#0f6ab8"/><path d="M2 9h20l-10 8z" fill="#e9f5fc"/><path d="M0 9l12 8 12-8v14H0z" fill="#36aeea"/><path d="M0 23l13-11 11-3v14z" fill="#2392d8" opacity=".6"/></svg></button>
    <button class="app"><svg viewBox="0 0 24 24"><path d="M3 0h18v24H3z" fill="#fff"/><path d="M5 2h14v4H5z" fill="#26323a"/><path d="M6 10h3M11 10h3M16 10h3M6 15h3M11 15h3M16 15h3M6 20h3M11 20h3M16 20h3" stroke="#26323a" stroke-width="2"/></svg></button>
    <button class="app"><svg class="ps" viewBox="0 0 24 24"><path d="M1 1h22v21H1z" fill="#0b3f85"/><path d="M2 2h20v6H2z" fill="#1658a3"/><text x="12" y="16">Ps</text></svg></button>
    <button class="app open"><svg viewBox="0 0 24 24"><path d="M0 0h24v24H0z" fill="#e4e4e2"/><circle cx="13" cy="4.500" r="2.500" fill="#222"/><path d="M3 9l6-1 5 1 3 3 4-2M12 9l-2 6 6 2 2 5M10 15l-4 4-4 1" fill="none" stroke="#222" stroke-width="2"/></svg></button>
    <button class="app open"><svg viewBox="0 0 24 24"><circle cx="12" cy="12" r="12" fill="#25d366"/><path d="M5 8q8-2 14 2M6 12.500q7-2 12 2M7 16.500q6-1.500 10 1.500" fill="none" stroke="#123" stroke-width="2"/></svg></button>
    <button class="app open"><svg viewBox="0 0 24 24"><path d="M12 4h11v16H12z" fill="#fff" stroke="#1e7045"/><path d="M13 8h9M13 12h9M13 16h9M18 4v16" stroke="#1e7045"/><path d="M1 3l13-2v22L1 21z" fill="#1c7343"/><path d="M5 8l5 8M10 8l-5 8" stroke="#fff" stroke-width="2"/></svg></button>

    <div class="tray">
      <button><svg viewBox="0 0 20 20"><path d="M5 12l5-5 5 5" stroke-width="1.500"/></svg></button>
      <button><svg viewBox="0 0 20 20"><path d="M7 4.500h11v9H5V8M11 14v3M7 17.500h8M2.500 2.500h4v4h-4z"/></svg></button>
      <button><svg viewBox="0 0 20 20"><path d="M3 10q1-5 6-6 4 0 5 3z" fill="#aaa" stroke="none"/><path d="M3 15q-1-4 3-5 2-5 7-2 2 2 2 4 4 0 3 4H5z" fill="#eee" stroke="none"/></svg></button>
      <button><svg viewBox="0 0 20 20"><path d="M7 6.500h10v8H6M18.500 9v3M3.500 10v6M1.500 5v4h4V5M2.500 5V3M4.500 5V3"/></svg></button>
      <button><svg viewBox="0 0 20 20"><path d="M2 8h3l4-4v12l-4-4H2zM11 8q1 2 0 4M13 6q3 4 0 8M15 4q5 6 0 12"/></svg></button>
      <button><svg viewBox="0 0 20 20"><path d="M5 15q-4-1-3-4 1-2 3-2 1-5 5-5t5 5q4 0 3 4-1 2-3 2z" fill="#fff"/><path d="M10 14V8M7.500 10L10 7.500 12.500 10" stroke="#222"/></svg></button>
      <button><svg viewBox="0 0 20 20"><path d="M6 14L14 3l2 1-7 11zM14 8q5 0 3 4M8 12q-6 0-6 3t4 2q4 0 3-4"/></svg></button>
      <div class="clock">09:53<br>19/06/2020</div>
      <button class="notes"><svg viewBox="0 0 20 20"><path d="M2 3h16v12H8l-3 3v-3H2z" fill="#fff"/><path d="M5 6h10M5 9h10M5 12h6" stroke="#233"/><circle cx="15" cy="14" r="3" fill="#fff" stroke="#233"/></svg></button>
    </div>
  </footer>
</body>
</html>
```

FILE: styles.css
```css
* {
  box-sizing: border-box;
}

body {
  margin: 0;
  height: 100vh;
  display: flex;
  flex-direction: column;
  overflow: hidden;
  background: #dfe3eb;
  color: #111;
  font-family: "Liberation Sans", Arial, sans-serif;
  font-size: 12px;
}

button {
  padding: 0;
  border: 0;
  background: none;
  color: inherit;
  font: inherit;
  white-space: nowrap;
}

.defs {
  position: absolute;
}

/* title and menu */
.titlebar {
  display: flex;
  align-items: center;
  height: 22px;
  padding: 0 2px;
  background: #fff;
  font-family: "Noto Sans", sans-serif;
  font-size: 11px;
}

.app-icon {
  width: 16px;
  height: 16px;
  margin-right: 5px;
}

.window-buttons {
  display: flex;
  margin-left: auto;
}

.window-buttons button {
  width: 46px;
  height: 22px;
}

.window-buttons svg {
  width: 12px;
  height: 12px;
  fill: none;
  stroke: #111;
}

.menu {
  display: flex;
  gap: 15px;
  height: 19px;
  padding: 2px 7px 0;
  background: #fff;
  font-family: "Noto Sans", sans-serif;
  font-size: 11px;
}

/* command area */
.command {
  border-top: 4px solid #dfe2e6;
  border-bottom: 4px solid #dfe3eb;
  background: #fff;
}

.history {
  display: flex;
  justify-content: space-between;
  height: 31px;
  padding-left: 2px;
  border-bottom: 1px solid #999ea4;
  line-height: 14px;
}

.history > :first-child {
  padding-top: 2px;
}

.scroll {
  width: 17px;
  background: #f0f0f0;
}

.scroll svg,
.spin svg {
  width: 15px;
  height: 100%;
}

.prompt {
  display: flex;
  height: 19px;
  padding-left: 2px;
  line-height: 18px;
  font-weight: bold;
}

.prompt input {
  flex: 1;
  border: 0;
  outline: 0;
}

.spin {
  width: 17px;
  height: 18px;
}

/* toolbar tabs */
.tool-tabs {
  display: flex;
  align-items: flex-end;
  height: 20px;
  padding-left: 1px;
  border-top: 1px solid #b4bac8;
  border-bottom: 1px solid #a2a8b4;
}

.tab {
  position: relative;
  isolation: isolate;
  height: 16px;
  padding: 0 7px 0 9px;
  font-size: 11px;
  line-height: 16px;
}

.tab::before,
.tab::after {
  content: "";
  position: absolute;
  z-index: -1;
  top: 0;
  bottom: 0;
  background: #d3daec;
  border-top: 1px solid #a2a9bb;
}

.tab::before {
  left: 3px;
  width: 50%;
  border-left: 1px solid #a2a9bb;
  border-top-left-radius: 3px;
  transform: skewX(-22deg);
}

.tab::after {
  left: 30%;
  right: 0;
  border-right: 1px solid #a2a9bb;
  border-top-right-radius: 5px;
}

.tab.active {
  height: 17px;
  margin-bottom: -1px;
}

.tab.active::before,
.tab.active::after {
  background: #fff;
}

.gear {
  width: 15px;
  height: 15px;
  margin-left: auto;
  margin-right: 1px;
}

/* icon buttons */
.toolbar {
  display: flex;
  height: 37px;
  padding-left: 1px;
  background: linear-gradient(#f8f9fb, #dfe3eb);
}

.toolbar button,
.palette button {
  position: relative;
  width: 28px;
  height: 28px;
}

.toolbar svg,
.palette svg {
  display: block;
  width: 24px;
  height: 24px;
  margin: 0 auto;
}

.fly::after {
  content: "";
  position: absolute;
  right: 0;
  bottom: 0;
  border-left: 6px solid transparent;
  border-bottom: 6px solid #666;
}

.workspace {
  flex: 1;
  display: flex;
  min-height: 0;
}

.palette {
  display: grid;
  grid-template-columns: repeat(3, 28px);
  grid-auto-rows: 28px;
  align-content: start;
  width: 109px;
  padding: 2px 0 0 1px;
}

/* viewport */
.view-column {
  flex: 1;
  display: flex;
  flex-direction: column;
  min-width: 0;
}

.viewport {
  position: relative;
  flex: 1;
  min-height: 0;
}

.scene {
  display: block;
  width: 100%;
  height: 100%;
}

.dim-lines {
  fill: none;
  stroke: #111;
}

.thin {
  stroke: #444;
}

.arrows path {
  marker-start: url(#arrow);
  marker-end: url(#arrow);
}

.dim-text {
  font-size: 34px;
  text-anchor: middle;
}

.axis-text {
  font-size: 14px;
  fill: #555;
}

.view-name {
  position: absolute;
  top: 0;
  left: 0;
  display: flex;
  align-items: center;
  gap: 6px;
  height: 19px;
  padding: 0 2px 0 10px;
  background: #829fc3;
  font-family: "Noto Sans", sans-serif;
  font-size: 11px;
}

.view-name svg {
  width: 12px;
  height: 14px;
}

.view-tabs {
  display: flex;
  height: 20px;
}

.view-tabs button {
  position: relative;
  isolation: isolate;
  height: 20px;
  padding: 2px 6px 0 11px;
  font-size: 12px;
}

.view-tabs button::before,
.view-tabs button::after {
  content: "";
  position: absolute;
  z-index: -1;
  top: 0;
  bottom: 0;
  background: #d0d6ea;
  border-bottom: 1px solid #a2a9bb;
}

.view-tabs button::before {
  left: 3px;
  width: 50%;
  border-left: 1px solid #a2a9bb;
  transform: skewX(22deg);
}

.view-tabs button::after {
  left: 30%;
  right: 0;
  border-right: 1px solid #a2a9bb;
  border-bottom-right-radius: 4px;
}

.view-tabs .active::before,
.view-tabs .active::after {
  background: #fff;
}

.view-tabs .add::before,
.view-tabs .add::after {
  background: #dfe3eb;
}

.add svg {
  width: 10px;
  height: 10px;
}

/* right panel */
.panel {
  display: flex;
  flex-direction: column;
  width: 341px;
  margin-left: 7px;
  padding: 2px 0 0;
}

.panel-tabs {
  display: flex;
  align-items: center;
  height: 21px;
}

.panel-tabs button {
  position: relative;
  isolation: isolate;
  width: 32px;
  height: 21px;
  padding-right: 9px;
  border-left: 1px solid #a2a9bb;
  border-top-left-radius: 3px;
}

.panel-tabs button::before {
  content: "";
  position: absolute;
  z-index: -1;
  inset: 0 0 0 0;
  border-top: 1px solid #a2a9bb;
  background: linear-gradient(225deg, transparent 7px, #a2a9bb 7px, #a2a9bb 8px, #d3daec 8px);
}

.panel-tabs .active::before {
  right: -5px;
  background: linear-gradient(225deg, transparent 9px, #a2a9bb 9px, #a2a9bb 10px, #fff 10px);
}

.panel-tabs button svg {
  width: 16px;
  height: 16px;
  vertical-align: middle;
}

.panel-tabs .rg {
  font-size: 14px;
  text-anchor: middle;
  fill: #d6bd5c;
}

.panel-body {
  flex: 1;
  margin-bottom: 1px;
  border: 1px solid #a2a9bb;
  background: #fff;
}

/* object snaps */
.osnap {
  display: flex;
  gap: 6px;
  align-items: center;
  height: 43px;
  padding: 0 0 7px 5px;
  color: #777;
  font-size: 11px;
}

.osnap label {
  display: flex;
  align-items: center;
  gap: 6px;
}

.osnap input {
  appearance: none;
  width: 12px;
  height: 12px;
  margin: 0;
  border: 1px solid #c6c8cc;
  background: #fff;
}

.osnap input:checked {
  background: #fff url("data:image/svg+xml,%3Csvg xmlns='http://www.w3.org/2000/svg' viewBox='0 0 10 10'%3E%3Cpath d='M2 5l2 2.500L8.500 2' fill='none' stroke='%23aaa' stroke-width='1.300'/%3E%3C/svg%3E");
}

.osnap .box {
  width: 15px;
  height: 15px;
}

.osnap .grey {
  background: #c5c7c9;
}

.osnap .on {
  gap: 4px;
  color: #111;
}

.osnap .on input {
  border: 1px solid #2c4f7c;
  background: #87919b;
  box-shadow: inset 0 0 0 1px #5b87b5, inset 0 0 0 2px #dfe3eb;
}

/* status line */
.status {
  display: flex;
  height: 20px;
  border-top: 1px solid #a2a9b8;
  line-height: 20px;
  text-align: center;
}

.status > * {
  border-right: 1px solid #a9b2c6;
}

.status button {
  padding: 0 8px;
}

.status .wide {
  padding: 0 13px;
}

.status .on {
  background: #e0f0fd;
  font-weight: bold;
}

.w-plane {
  width: 57px;
}

.w-coord {
  width: 88px;
}

.w-layer {
  display: flex;
  align-items: center;
  gap: 2px;
  width: 173px;
  padding-left: 3px;
}

.w-layer i {
  width: 14px;
  height: 14px;
  background: #000;
}

.status .w-grid {
  width: 118px;
}

.status .memory {
  flex: 1;
  margin-right: 7px;
  padding-left: 4px;
  text-align: left;
}

/* taskbar */
.taskbar {
  display: flex;
  height: 40px;
  background: linear-gradient(90deg, #263840, #22313a 55%, #2b2e2f 72%, #1e2d35 82%, #1c2c33);
  color: #fff;
  font-family: "Open Sans", sans-serif;
}

.taskbar button {
  display: flex;
  align-items: center;
  justify-content: center;
  width: 48px;
}

.taskbar button svg {
  width: 24px;
  height: 24px;
}

.taskbar .start svg {
  width: 16px;
  height: 16px;
}

.taskbar .task-view {
  width: 50px;
}

.search {
  display: flex;
  align-items: center;
  gap: 8px;
  width: 344px;
  padding-left: 11px;
  background: #f2f2f2;
  border: 1px solid #ccc;
}

.search svg {
  width: 18px;
  height: 18px;
}

.search input {
  flex: 1;
  border: 0;
  outline: 0;
  background: none;
  font: 14px "Open Sans", sans-serif;
}

.search input::placeholder {
  color: #333;
}

.taskbar .app {
  position: relative;
  width: 49px;
}

.open::after {
  content: "";
  position: absolute;
  left: 5px;
  right: 4px;
  bottom: 0;
  height: 2px;
  background: #e8cb95;
}

.taskbar .active {
  background: #53626a;
}

.active.open::after {
  left: 0;
  right: 0;
}

.ps {
  font-size: 12px;
  font-weight: bold;
  text-anchor: middle;
  fill: #8ecbf5;
}

.tray {
  display: flex;
  margin-left: auto;
  margin-right: 4px;
  border-right: 1px solid #57646b;
}

.tray button {
  width: 24px;
}

.taskbar .tray svg {
  width: 18px;
  height: 18px;
  fill: none;
  stroke: #fff;
}

.clock {
  width: 80px;
  font-size: 11px;
  line-height: 18px;
  padding-top: 2px;
  text-align: center;
}

.taskbar .notes {
  width: 34px;
  margin-right: 10px;
}
```
